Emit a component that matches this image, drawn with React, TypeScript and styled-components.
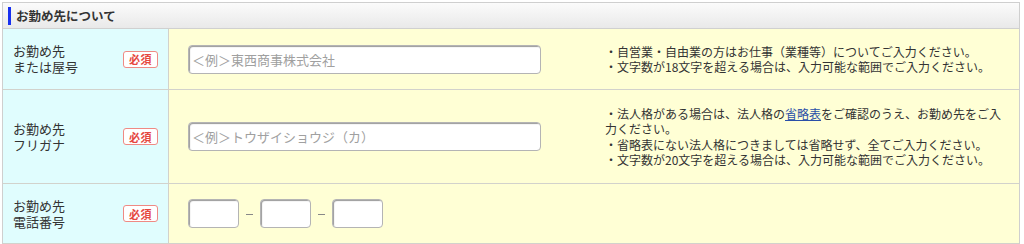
import React from "react";
import styled, { createGlobalStyle } from "styled-components";

const GlobalStyle = createGlobalStyle`
  html, body {
    margin: 0;
    padding: 0;
    background: #ffffff;
  }
  body {
    font-family: "Noto Sans CJK JP", "Noto Sans", sans-serif;
    color: #333;
  }
`;

const Section = styled.section`
  margin: 2px 4px 0 2px;
  border: 1px solid #cfcfcf;
  border-bottom: none;
`;

const Header = styled.h2`
  margin: 0;
  height: 25px;
  display: flex;
  align-items: center;
  padding-left: 5px;
  font-size: 12.5px;
  font-weight: bold;
  color: #333;
  background: linear-gradient(#fbfbfb, #e9e9e9);
  border-bottom: 1px solid #d0d0d0;

  &::before {
    content: "";
    width: 3px;
    height: 18px;
    background: #1830f0;
    margin-right: 5px;
  }
`;

const Row = styled.div<{ $height: number }>`
  display: grid;
  grid-template-columns: 166px 1fr;
  height: ${(p) => p.$height}px;
  border-bottom: 1px solid #d2d2cc;
`;

const LabelCell = styled.div`
  display: flex;
  align-items: center;
  justify-content: space-between;
  padding: 0 10px 0 10px;
  background: #e0fdfe;
  border-right: 1px solid #d2d2cc;
`;

const LabelText = styled.div`
  font-size: 13px;
  line-height: 16px;
  color: #333;
`;

const Required = styled.span`
  display: inline-flex;
  align-items: center;
  justify-content: center;
  box-sizing: border-box;
  width: 35px;
  height: 17px;
  border: 1.5px solid #ef8a84;
  border-radius: 3px;
  background: #fff;
  color: #e5483f;
  font-size: 11px;
  font-weight: bold;
  letter-spacing: 0.5px;
`;

const ValueCell = styled.div`
  display: flex;
  align-items: center;
  background: #ffffd5;
  padding-left: 19px;
`;

const Field = styled.div`
  width: 417px;
  flex-shrink: 0;
  display: flex;
  align-items: center;
`;

const TextInput = styled.input<{ $width: number }>`
  box-sizing: border-box;
  width: ${(p) => p.$width}px;
  height: 29px;
  padding: 0 3px;
  border: 1px solid #b4b4b4;
  border-radius: 4px;
  box-shadow: inset 1px 1px 1px rgba(0, 0, 0, 0.4);
  background: #fff;
  font-family: inherit;
  font-size: 13px;
  color: #333;
  outline: none;

  &::placeholder {
    color: #a0a0a0;
  }
`;

const Dash = styled.span`
  width: 7px;
  height: 1px;
  background: #888;
  margin: 2px 7px 0 7px;
`;

const Notes = styled.div`
  width: 402px;
  font-size: 12px;
  line-height: 15.5px;
  color: #333;

  p {
    margin: 0;
  }

  a {
    color: #2a4fa8;
    text-decoration: underline;
  }
`;

export default function App() {
  return (
    <>
      <GlobalStyle />
      <Section>
        <Header>お勤め先について</Header>

        <Row $height={60}>
          <LabelCell>
            <LabelText>
              お勤め先
              <br />
              または屋号
            </LabelText>
            <Required>必須</Required>
          </LabelCell>
          <ValueCell>
            <Field>
              <TextInput $width={353} placeholder="＜例＞東西商事株式会社" />
            </Field>
            <Notes>
              <p>・自営業・自由業の方はお仕事（業種等）についてご入力ください。</p>
              <p>・文字数が18文字を超える場合は、入力可能な範囲でご入力ください。</p>
            </Notes>
          </ValueCell>
        </Row>

        <Row $height={93}>
          <LabelCell>
            <LabelText>
              お勤め先
              <br />
              フリガナ
            </LabelText>
            <Required>必須</Required>
          </LabelCell>
          <ValueCell>
            <Field>
              <TextInput $width={353} placeholder="＜例＞トウザイショウジ（カ）" />
            </Field>
            <Notes>
              <p>
                ・法人格がある場合は、法人格の<a href="#">省略表</a>
                をご確認のうえ、お勤め先をご入力ください。
              </p>
              <p>・省略表にない法人格につきましては省略せず、全てご入力ください。</p>
              <p>・文字数が20文字を超える場合は、入力可能な範囲でご入力ください。</p>
            </Notes>
          </ValueCell>
        </Row>

        <Row $height={59}>
          <LabelCell>
            <LabelText>
              お勤め先
              <br />
              電話番号
            </LabelText>
            <Required>必須</Required>
          </LabelCell>
          <ValueCell>
            <Field>
              <TextInput $width={51} />
              <Dash />
              <TextInput $width={51} />
              <Dash />
              <TextInput $width={51} />
            </Field>
          </ValueCell>
        </Row>
      </Section>
    </>
  );
}
